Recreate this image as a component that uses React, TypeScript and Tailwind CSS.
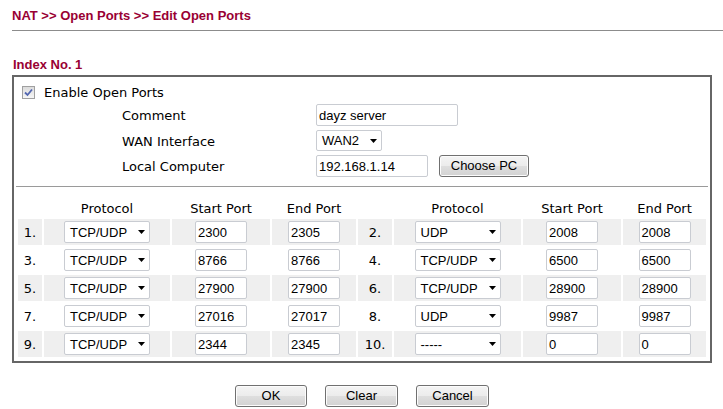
import React from "react";

const V = { fontFamily: '"DejaVu Sans", Verdana, sans-serif' };
const A = { fontFamily: '"Liberation Sans", Arial, sans-serif' };

function Arrow() {
  return (
    <svg width="7" height="4" viewBox="0 0 7 4" className="absolute right-[4px] top-1/2 -translate-y-1/2">
      <path d="M0 0 H7 L3.5 4 Z" fill="#000" />
    </svg>
  );
}

function Select({ value, w }: { value: string; w: string }) {
  return (
    <div
      className={`relative ${w} h-[22px] border border-[#c9ccd2] rounded-[2px] bg-white flex items-center pl-[5px] text-[13px] text-black leading-none`}
      style={A}
    >
      {value}
      <Arrow />
    </div>
  );
}

function TextBox({ value, w }: { value: string; w: string }) {
  return (
    <div
      className={`${w} h-[22px] border border-[#c9ccd2] rounded-[2px] bg-white flex items-center pl-[2px] text-[13px] text-black leading-none`}
      style={A}
    >
      {value}
    </div>
  );
}

function Btn({ label, w }: { label: string; w: string }) {
  return (
    <div
      className={`${w} h-[22px] border border-[#707070] rounded-[3px] flex items-center justify-center text-[13px] text-black bg-[linear-gradient(to_bottom,#f4f4f4_0%,#ececec_48%,#dedede_52%,#d2d2d2_100%)] shadow-[inset_0_0_0_1px_#fcfcfc]`}
      style={A}
    >
      {label}
    </div>
  );
}

const rows: [string, string, string, string][] = [
  ["1.", "TCP/UDP", "2300", "2305"],
  ["2.", "UDP", "2008", "2008"],
  ["3.", "TCP/UDP", "8766", "8766"],
  ["4.", "TCP/UDP", "6500", "6500"],
  ["5.", "TCP/UDP", "27900", "27900"],
  ["6.", "TCP/UDP", "28900", "28900"],
  ["7.", "TCP/UDP", "27016", "27017"],
  ["8.", "UDP", "9987", "9987"],
  ["9.", "TCP/UDP", "2344", "2345"],
  ["10.", "-----", "0", "0"],
];

export default function App() {
  const pairs = [0, 1, 2, 3, 4].map((i) => [rows[i * 2], rows[i * 2 + 1]]);
  return (
    <div className="w-[723px] h-[409px] bg-white overflow-hidden text-black">
      <div className="pl-[12px] pt-[8px] h-[30px] text-[13px] font-bold leading-[15px] text-[#990033]" style={A}>
        NAT &gt;&gt; Open Ports &gt;&gt; Edit Open Ports
      </div>
      <div className="ml-[12px] h-px bg-[#8c8c8c]" />
      <div className="mt-[26px] pl-[13px] h-[15px] text-[13px] font-bold leading-[15px] text-[#990033]" style={A}>
        Index No. 1
      </div>
      <div className="mt-[3px] ml-[12px] w-[700px] border-2 border-[#666666] pb-[4px]">
        <div className="pt-[6px] pl-[8px] h-[25px] flex items-center gap-[9px]">
          <div className="w-[13px] h-[13px] border border-[#a0a0a0] bg-[linear-gradient(to_bottom,#dcdcdc,#f6f6f6)] flex items-center justify-center">
            <svg width="9" height="9" viewBox="0 0 9 9">
              <path d="M1 4.5 L3.5 7 L8 1.5" stroke="#5266b0" strokeWidth="1.8" fill="none" />
            </svg>
          </div>
          <span className="text-[13px] leading-none" style={V}>Enable Open Ports</span>
        </div>
        <div className="mt-[2px] pl-[108px] flex items-center h-[22px]">
          <span className="w-[194px] text-[13px] pt-[2px]" style={V}>Comment</span>
          <TextBox value="dayz server" w="w-[142px]" />
        </div>
        <div className="mt-[4px] pl-[108px] flex items-center h-[21px]">
          <span className="w-[194px] text-[13px] pt-[2px]" style={V}>WAN Interface</span>
          <Select value="WAN2" w="w-[66px] !h-[21px]" />
        </div>
        <div className="mt-[4px] pl-[108px] flex items-center h-[22px]">
          <span className="w-[194px] text-[13px] pt-[2px]" style={V}>Local Computer</span>
          <TextBox value="192.168.1.14" w="w-[112px]" />
          <div className="ml-[11px]">
            <Btn label="Choose PC" w="w-[90px]" />
          </div>
        </div>
        <div className="mt-[9px] mx-[2px] h-px bg-[#9a9a9a]" />
        <div
          className="mt-[10px] pl-[4px] grid grid-cols-[24px_126px_98px_84px_34px_127px_98px_83px] gap-x-[2px] gap-y-[2px] text-[13px]"
          style={V}
        >
          <div className="h-[20px]" />
          <div className="h-[20px] pt-[2px] text-center">Protocol</div>
          <div className="h-[20px] pt-[2px] text-center">Start Port</div>
          <div className="h-[20px] pt-[2px] text-center">End Port</div>
          <div className="h-[20px]" />
          <div className="h-[20px] pt-[2px] text-center">Protocol</div>
          <div className="h-[20px] pt-[2px] text-center">Start Port</div>
          <div className="h-[20px] pt-[2px] text-center">End Port</div>
          {pairs.map((pair, i) => {
            const bg = i % 2 === 0 ? "bg-[#efefef]" : "bg-white";
            return (
              <React.Fragment key={i}>
                {pair.map((r) => (
                  <React.Fragment key={r[0]}>
                    <div className={`h-[26px] ${bg} flex items-center justify-center pt-[1px]`}>{r[0]}</div>
                    <div className={`h-[26px] ${bg} flex items-center justify-center`}>
                      <Select value={r[1]} w="w-[86px]" />
                    </div>
                    <div className={`h-[26px] ${bg} flex items-center justify-center`}>
                      <TextBox value={r[2]} w="w-[52px]" />
                    </div>
                    <div className={`h-[26px] ${bg} flex items-center justify-center`}>
                      <TextBox value={r[3]} w="w-[52px]" />
                    </div>
                  </React.Fragment>
                ))}
              </React.Fragment>
            );
          })}
        </div>
      </div>
      <div className="mt-[22px] ml-[12px] w-[700px] flex justify-center gap-[18px]">
        <Btn label="OK" w="w-[72px]" />
        <Btn label="Clear" w="w-[73px]" />
        <Btn label="Cancel" w="w-[73px]" />
      </div>
    </div>
  );
}
